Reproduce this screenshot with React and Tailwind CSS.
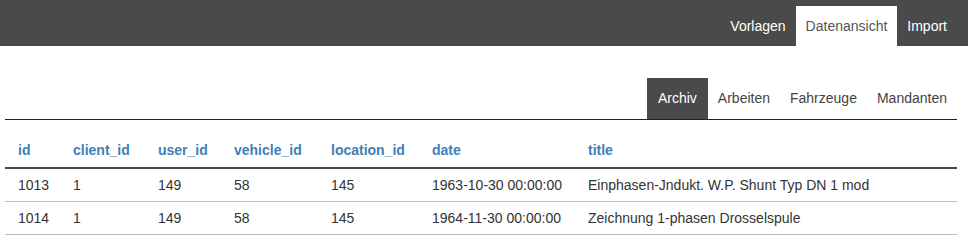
const columns = ['id', 'client_id', 'user_id', 'vehicle_id', 'location_id', 'date', 'title']
const widths = ['w-[55px]', 'w-[85px]', 'w-[76px]', 'w-[97px]', 'w-[101px]', 'w-[156px]', '']

const rows = [
  ['1013', '1', '149', '58', '145', '1963-10-30 00:00:00', 'Einphasen-Jndukt. W.P. Shunt Typ DN 1 mod'],
  ['1014', '1', '149', '58', '145', '1964-11-30 00:00:00', 'Zeichnung 1-phasen Drosselspule'],
]

export default function App() {
  return (
    <div className="min-h-[246px] bg-white text-[14px] text-[#333] font-['Liberation_Sans',Arial,sans-serif]">
      {/* top navigation */}
      <div className="h-[46px] bg-[#4a4a4a] flex items-end justify-end pr-[11px]">
        <a className="h-[40px] px-[10px] flex items-center text-white">Vorlagen</a>
        <a className="h-[40px] px-[10px] flex items-center bg-white text-[#555]">Datenansicht</a>
        <a className="h-[40px] px-[10px] flex items-center text-white">Import</a>
      </div>

      <div className="pl-[5px] pr-[11px]">
        {/* sub tabs */}
        <div className="mt-[32px] flex justify-end border-b border-[#222]">
          <a className="h-[41px] px-[11px] flex items-center bg-[#4a4a4a] text-white">Archiv</a>
          <a className="h-[41px] px-[10px] flex items-center text-[#444]">Arbeiten</a>
          <a className="h-[41px] px-[10px] flex items-center text-[#444]">Fahrzeuge</a>
          <a className="h-[41px] px-[10px] flex items-center text-[#444]">Mandanten</a>
        </div>

        <table className="mt-[12px] w-full border-collapse text-left">
          <thead>
            <tr className="border-b-2 border-[#444]">
              {columns.map((c, i) => (
                <th key={c} className={`${widths[i]} pl-[13px] pt-2 pb-[7px] leading-5 font-bold text-[#3f80b6]`}>
                  {c}
                </th>
              ))}
            </tr>
          </thead>
          <tbody>
            {rows.map(r => (
              <tr key={r[0]} className="border-b border-[#bbb]">
                {r.map((v, i) => (
                  <td key={i} className="pl-[13px] py-[6px] leading-5">{v}</td>
                ))}
              </tr>
            ))}
          </tbody>
        </table>
      </div>
    </div>
  )
}
